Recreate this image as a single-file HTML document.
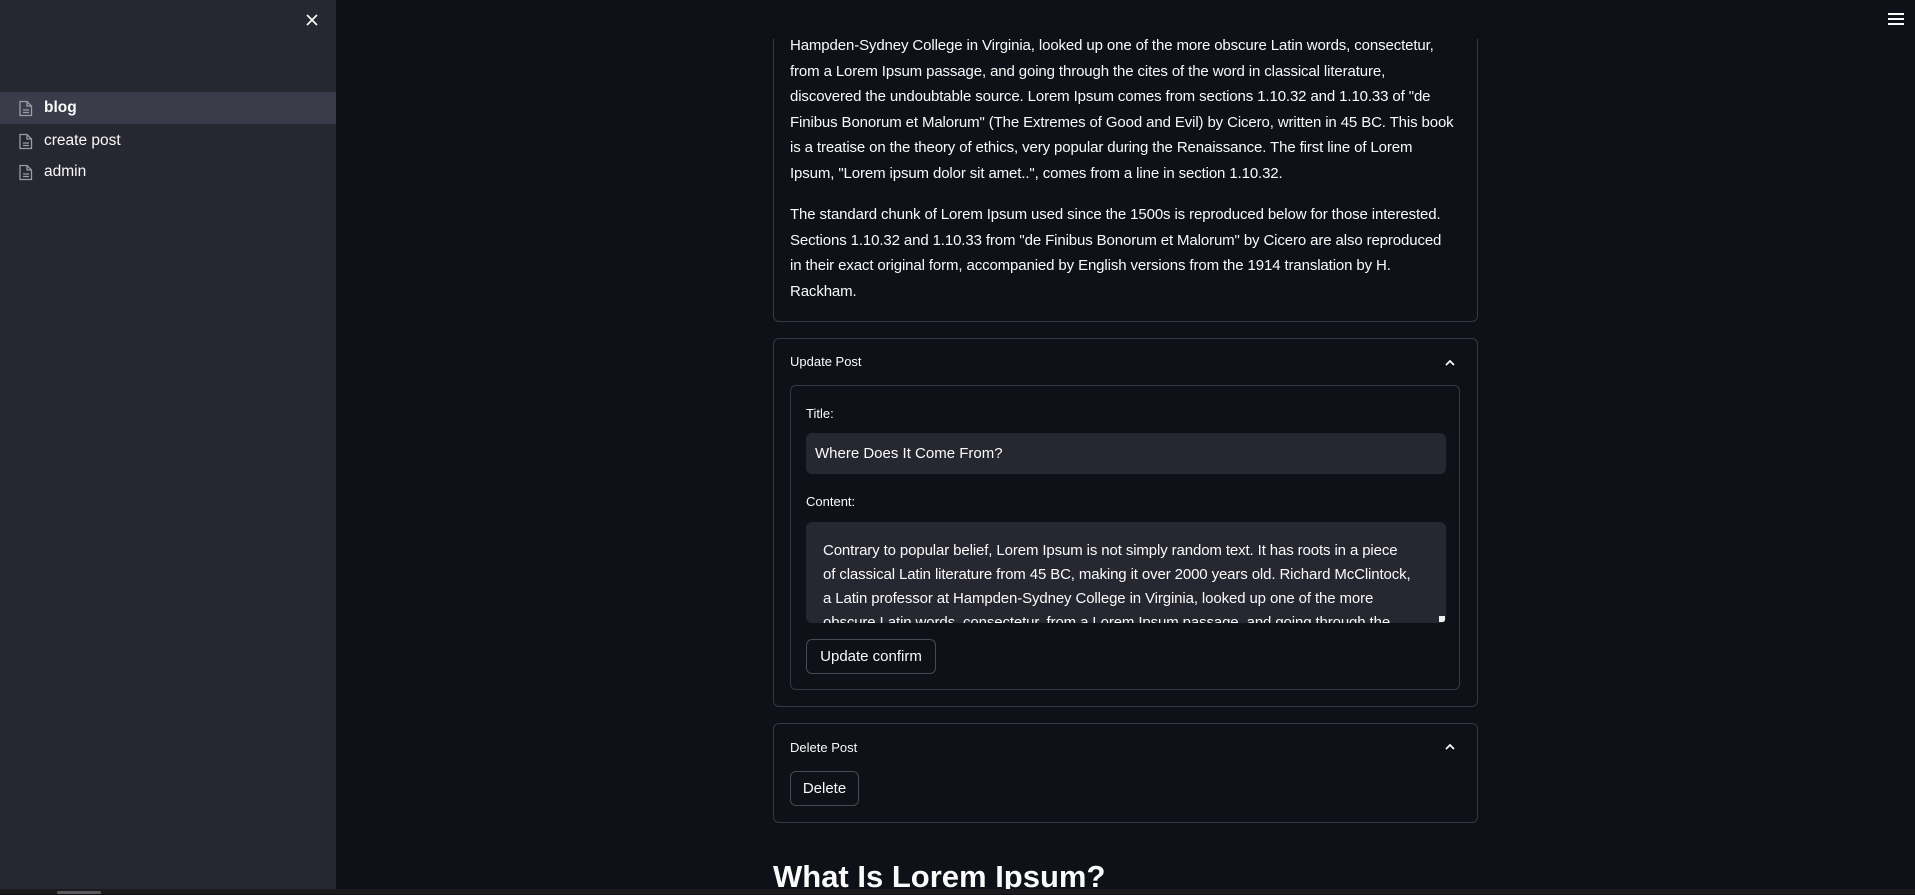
<!DOCTYPE html>
<html><head><meta charset="utf-8"><style>
*{margin:0;padding:0;box-sizing:border-box}
body{width:1915px;height:894px;overflow:hidden;background:#0e1117;color:#fafafa;font-family:"Liberation Sans",sans-serif;position:relative}
.sb{position:absolute;left:0;top:0;width:336px;height:889px;background:#262730}
.nav{position:absolute;left:0;width:336px;height:32px;font-size:15.5px;line-height:32px}
.nav.sel{background:#3b3c4a;font-weight:bold}
.nav svg{position:absolute;left:18px;top:8px}
.nav span{position:absolute;left:44px}
.abs{position:absolute}
.box{position:absolute;border:1px solid #363941;border-radius:6px}
.p{position:absolute;left:790px;font-size:15px;letter-spacing:-0.12px;line-height:25.6px;white-space:nowrap}
.lbl{position:absolute;font-size:13px}
.btn{position:absolute;border:1px solid #474a52;border-radius:6px;font-size:15px;display:flex;align-items:center;justify-content:center;background:#0e1117}
</style></head><body>
<div class="sb">
<svg class="abs" style="left:305px;top:13px" width="14" height="14" viewBox="0 0 14 14"><path d="M2 2L12 12M12 2L2 12" stroke="#fafafa" stroke-width="1.7"/></svg>
<div class="nav sel" style="top:92px"><svg width="16" height="17" viewBox="0 0 16 17"><path d="M2 1.5h7l4.5 4.5v9.5h-11.5z M9 1.5v4.5h4.5" fill="none" stroke="#9a9ba5" stroke-width="1.3"/><path d="M5 10h6M5 12.5h6" stroke="#9a9ba5" stroke-width="1.2"/></svg><span>blog</span></div>
<div class="nav" style="top:125px"><svg width="16" height="17" viewBox="0 0 16 17"><path d="M2 1.5h7l4.5 4.5v9.5h-11.5z M9 1.5v4.5h4.5" fill="none" stroke="#9a9ba5" stroke-width="1.3"/><path d="M5 10h6M5 12.5h6" stroke="#9a9ba5" stroke-width="1.2"/></svg><span>create post</span></div>
<div class="nav" style="top:156px"><svg width="16" height="17" viewBox="0 0 16 17"><path d="M2 1.5h7l4.5 4.5v9.5h-11.5z M9 1.5v4.5h4.5" fill="none" stroke="#9a9ba5" stroke-width="1.3"/><path d="M5 10h6M5 12.5h6" stroke="#9a9ba5" stroke-width="1.2"/></svg><span>admin</span></div>
</div>

<div class="box" style="left:773px;top:-10px;width:705px;height:332px"></div>
<div class="abs" style="left:336px;top:0;width:1579px;height:39px;background:#0e1117"></div>
<div class="abs" style="left:1888px;top:13px;width:16px;height:2px;background:#fafafa"></div>
<div class="abs" style="left:1888px;top:18px;width:16px;height:2px;background:#fafafa"></div>
<div class="abs" style="left:1888px;top:23px;width:16px;height:2px;background:#fafafa"></div>

<div class="p" style="top:33px">Hampden-Sydney College in Virginia, looked up one of the more obscure Latin words, consectetur,<br>from a Lorem Ipsum passage, and going through the cites of the word in classical literature,<br>discovered the undoubtable source. Lorem Ipsum comes from sections 1.10.32 and 1.10.33 of "de<br>Finibus Bonorum et Malorum" (The Extremes of Good and Evil) by Cicero, written in 45 BC. This book<br>is a treatise on the theory of ethics, very popular during the Renaissance. The first line of Lorem<br>Ipsum, "Lorem ipsum dolor sit amet..", comes from a line in section 1.10.32.</div>
<div class="p" style="top:202px">The standard chunk of Lorem Ipsum used since the 1500s is reproduced below for those interested.<br>Sections 1.10.32 and 1.10.33 from "de Finibus Bonorum et Malorum" by Cicero are also reproduced<br>in their exact original form, accompanied by English versions from the 1914 translation by H.<br>Rackham.</div>

<div class="box" style="left:773px;top:338px;width:705px;height:369px"></div>
<div class="lbl" style="left:790px;top:354px">Update Post</div>
<svg class="abs" style="left:1444px;top:358px" width="12" height="10" viewBox="0 0 12 10"><path d="M2 7L6 3L10 7" fill="none" stroke="#fafafa" stroke-width="1.8"/></svg>
<div class="box" style="left:790px;top:385px;width:670px;height:305px"></div>
<div class="lbl" style="left:806px;top:406px">Title:</div>
<div class="abs" style="left:806px;top:433px;width:640px;height:41px;background:#262730;border-radius:6px;font-size:15px;line-height:41px;padding-left:9px">Where Does It Come From?</div>
<div class="lbl" style="left:806px;top:494px">Content:</div>
<div class="abs" style="left:806px;top:522px;width:640px;height:101px;background:#262730;border-radius:6px;overflow:hidden">
<div style="position:absolute;left:17px;top:17px;font-size:15px;letter-spacing:-0.12px;line-height:24px;white-space:nowrap">Contrary to popular belief, Lorem Ipsum is not simply random text. It has roots in a piece<br>of classical Latin literature from 45 BC, making it over 2000 years old. Richard McClintock,<br>a Latin professor at Hampden-Sydney College in Virginia, looked up one of the more<br>obscure Latin words, consectetur, from a Lorem Ipsum passage, and going through the</div>
<div style="position:absolute;right:1px;bottom:1px;width:6px;height:6px;background:#eee"></div>
</div>
<div class="btn" style="left:806px;top:639px;width:130px;height:35px">Update confirm</div>

<div class="box" style="left:773px;top:723px;width:705px;height:100px"></div>
<div class="lbl" style="left:790px;top:740px">Delete Post</div>
<svg class="abs" style="left:1444px;top:742px" width="12" height="10" viewBox="0 0 12 10"><path d="M2 7L6 3L10 7" fill="none" stroke="#fafafa" stroke-width="1.8"/></svg>
<div class="btn" style="left:790px;top:771px;width:69px;height:35px">Delete</div>

<div class="abs" style="left:773px;top:859px;font-size:31px;font-weight:bold;white-space:nowrap">What Is Lorem Ipsum?</div>
<div class="abs" style="left:0;top:889px;width:1915px;height:5px;background:#1b1b1d"></div>
<div class="abs" style="left:57px;top:891px;width:44px;height:3px;background:#5a5a5e;border-radius:2px"></div>
</body></html>
